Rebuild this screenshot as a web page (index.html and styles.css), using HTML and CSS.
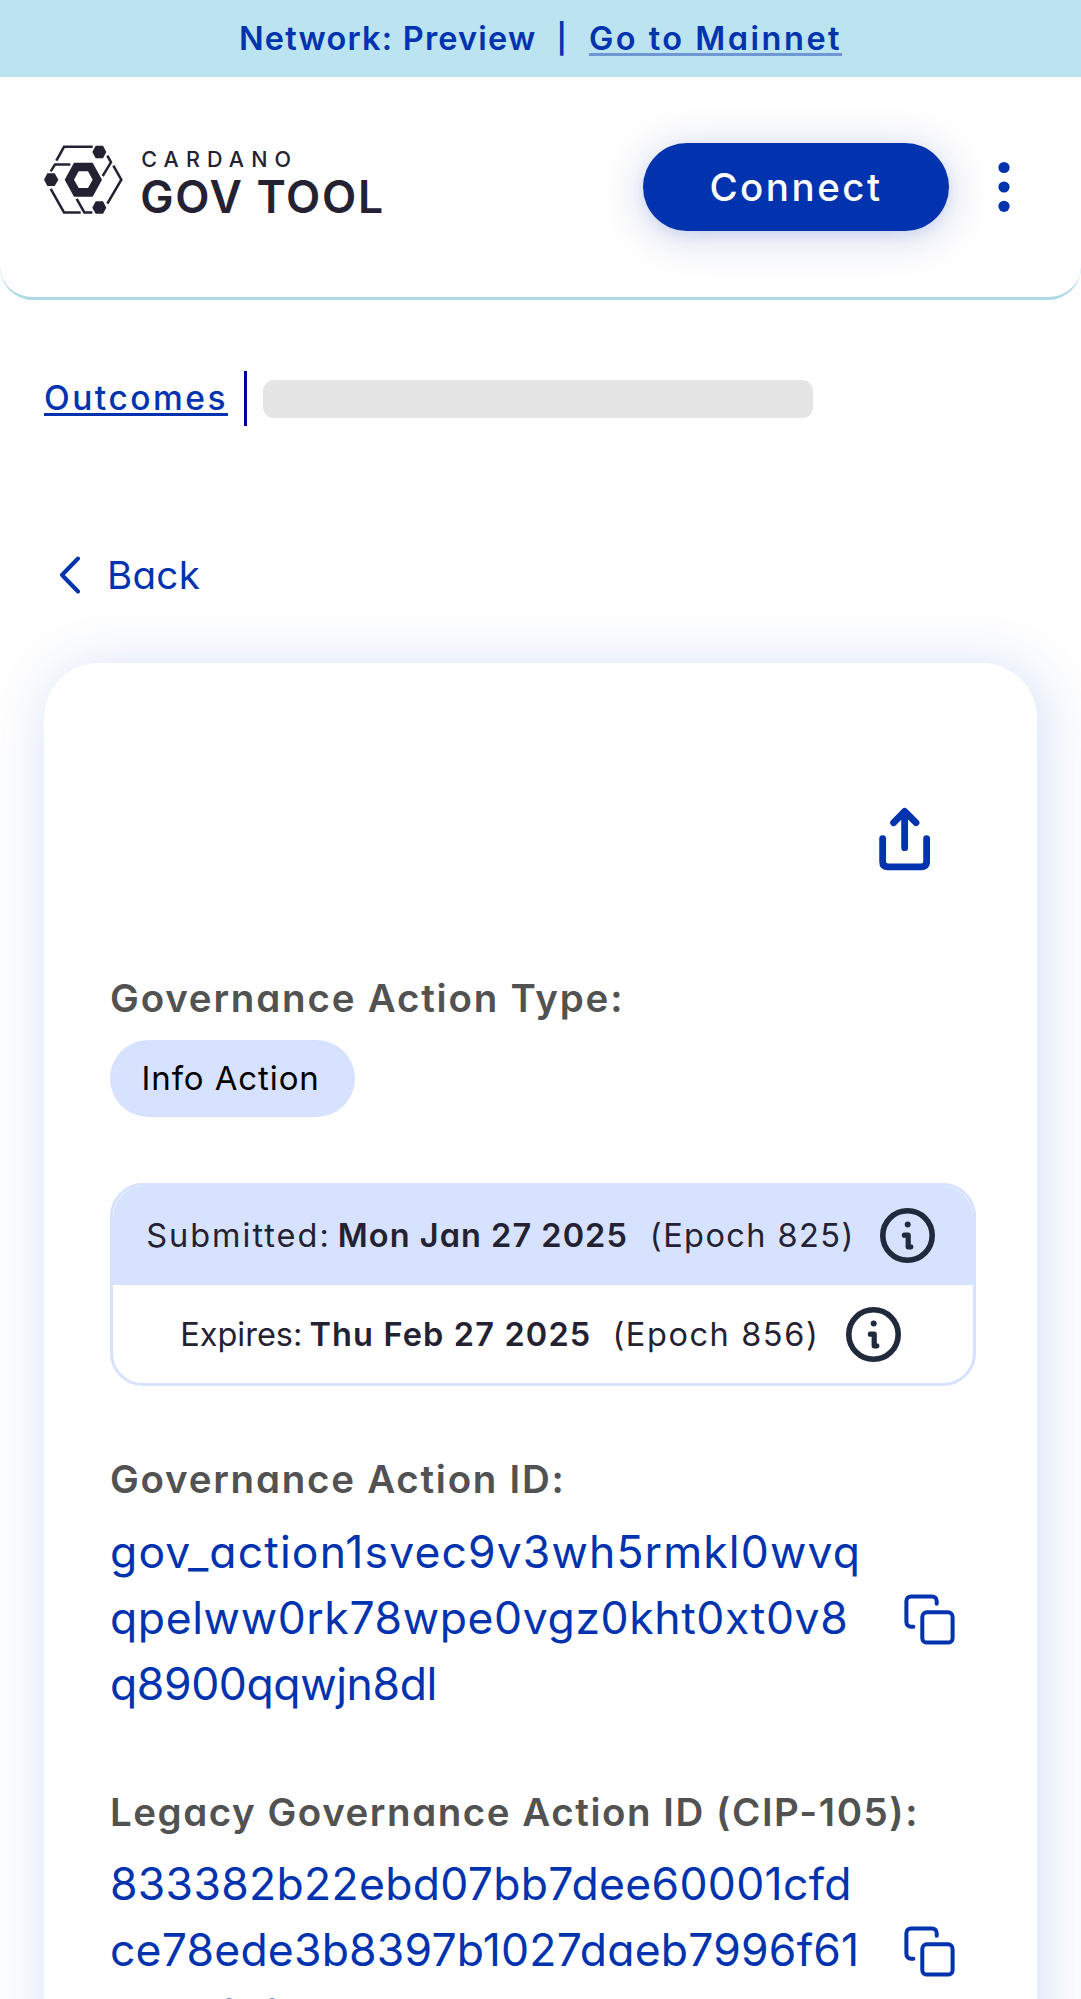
FILE: index.html
```html
<!DOCTYPE html>
<html lang="en">
<head>
<meta charset="utf-8">
<title>Cardano GovTool</title>
<link rel="stylesheet" href="styles.css">
</head>
<body>
<svg class="sprite" width="0" height="0">
  <symbol id="info" viewBox="0 0 55 55">
    <circle cx="27.5" cy="27.5" r="24.7" fill="none" stroke="#212a3d" stroke-width="5.6"/>
    <circle cx="27.7" cy="16.6" r="3" fill="#212a3d"/>
    <path d="M24.4 27.2h3.8V38.8h2.6" fill="none" stroke="#212a3d" stroke-width="5.2" stroke-linecap="round" stroke-linejoin="round"/>
  </symbol>
  <symbol id="copy" viewBox="0 0 51 51">
    <g fill="none" stroke="#0033ad" stroke-width="4" stroke-linecap="round">
      <rect x="18.3" y="18.3" width="30.3" height="30.3" rx="4.6"/>
      <path d="M32.7 9.7V7a4.6 4.6 0 0 0-4.6-4.6H7A4.6 4.6 0 0 0 2.4 7v21A4.6 4.6 0 0 0 7 32.7h2.4"/>
    </g>
  </symbol>
</svg>

<div class="banner">
  <span class="network">Network: Preview</span>
  <span class="pipe">|</span>
  <a class="mainnet">Go to Mainnet</a>
</div>

<header class="header">
  <div class="brand">
    <svg class="mark" viewBox="42 46 236 208">
      <g fill="none" stroke="#242232" stroke-width="7.5">
        <path d="M79 93 102 51.500H188"/>
        <path d="M232 78 243 98 218 139"/>
        <path d="M250 108 274 150 232 222"/>
        <path d="M62 178 102 248.500H152"/>
        <path d="M140 208 163 248.500H187"/>
        <path d="M62 125 75 104.500H121"/>
      </g>
      <g fill="#242232">
        <path d="M187 67 197 48H219L229 67 219 86H197Z"/>
        <path d="M187 234 197 215H219L229 234 219 252H197Z"/>
        <path d="M42 150 52 131H74L85 150 74 169H52Z"/>
        <path fill-rule="evenodd" d="M104 150 132 99H188L216 150 188 201H132ZM132 150 146 175H174L188 150 174 125H146Z"/>
      </g>
    </svg>
    <div class="wordmark">
      <span class="cardano">CARDANO</span>
      <span class="govtool">GOV TOOL</span>
    </div>
  </div>
  <button class="connect">Connect</button>
  <svg class="menu" viewBox="0 0 12 52" fill="#0033ad">
    <circle cx="6" cy="6.500" r="5.600"/><circle cx="6" cy="26" r="5.600"/><circle cx="6" cy="45.300" r="5.600"/>
  </svg>
</header>

<main>
  <nav class="crumbs">
    <a class="outcomes">Outcomes</a>
    <span class="divider"></span>
    <span class="skeleton"></span>
  </nav>

  <a class="back">
    <svg class="chevron" viewBox="0 0 22 38"><path d="M19 2.500 3 19 19 35.500" fill="none" stroke="#0033ad" stroke-width="4" stroke-linecap="round" stroke-linejoin="round"/></svg>
    <span>Back</span>
  </a>

  <section class="card">
    <svg class="share" viewBox="117 500 154 192">
      <g fill="none" stroke="#0033ad" stroke-width="20.500" stroke-linecap="round" stroke-linejoin="round">
        <path d="M128 595V664Q128 679.500 144 679.500H244Q260 679.500 260 664V595"/>
        <path d="M194 622V514M161 547 194 513 228 547"/>
      </g>
    </svg>

    <h2 class="label type">Governance Action Type:</h2>
    <span class="pill">Info Action</span>

    <div class="dates">
      <div class="row submitted">
        <span class="name">Submitted:</span><b>Mon Jan 27 2025</b><span class="epoch">(Epoch 825)</span>
        <svg class="info"><use href="#info"/></svg>
      </div>
      <div class="row expires">
        <span class="name">Expires:</span><b>Thu Feb 27 2025</b><span class="epoch">(Epoch 856)</span>
        <svg class="info"><use href="#info"/></svg>
      </div>
    </div>

    <h2 class="label action">Governance Action ID:</h2>
    <div class="id">
      <div class="value">
        <span class="a1">gov_action1svec9v3wh5rmkl0wvq</span>
        <span class="a2">qpelww0rk78wpe0vgz0kht0xt0v8</span>
        <span class="a3">q8900qqwjn8dl</span>
      </div>
      <svg class="copy"><use href="#copy"/></svg>
    </div>

    <h2 class="label legacy">Legacy Governance Action ID (CIP-105):</h2>
    <div class="id">
      <div class="value">
        <span class="l1">833382b22ebd07bb7dee60001cfd</span>
        <span class="l2">ce78ede3b8397b1027daeb7996f61</span>
        <span class="l3">9e02f8f#0</span>
      </div>
      <svg class="copy"><use href="#copy"/></svg>
    </div>
  </section>
</main>
</body>
</html>
```
FILE: styles.css
```css
* { box-sizing: border-box; }

body {
  margin: 0;
  height: 1999px;
  overflow: hidden;
  background: #fefefe;
  color: #242232;
  font-family: Inter, "Liberation Sans", sans-serif;
  font-feature-settings: "cv11";
  white-space: nowrap;
}

svg { display: block; flex: none; }
.sprite { position: absolute; }

.banner {
  display: flex;
  justify-content: center;
  height: 77px;
  line-height: 77px;
  background: #bbe3f0;
  color: #0033ad;
  font-size: 32.5px;
  font-weight: 600;
}
.network { letter-spacing: 1.2px; }
.pipe { margin: 0 22px 0 20px; font-size: 29px; }
.mainnet {
  letter-spacing: 2.5px;
  text-decoration: underline 2.75px #6f97d3;
  text-decoration-skip-ink: none;
  text-underline-offset: 2.5px;
}

.header {
  display: flex;
  align-items: center;
  height: 222.5px;
  padding: 0 71px 0 44px;
  border-bottom: 3px solid #add8e6;
  border-radius: 0 0 33px 33px;
}
.brand { display: flex; align-items: flex-start; height: 74px; margin: 0 auto 10px 0; }
.mark { width: 78.7px; height: 69.3px; }
.wordmark { display: flex; flex-direction: column; gap: 5px; margin: 3.5px 0 0 17.5px; }
.cardano { font-size: 21.5px; line-height: 22px; font-weight: 500; letter-spacing: 7.1px; padding-left: 1px; }
.govtool { font-size: 44.5px; line-height: 44px; font-weight: 600; letter-spacing: 1.7px; }
.connect {
  width: 306px;
  height: 88px;
  margin-right: 49px;
  padding: 0;
  border: 0;
  border-radius: 44px;
  background: #0033ad;
  box-shadow: 0 5.5px 41px rgba(0, 51, 173, .2), 0 4px 12px rgba(0, 51, 173, .08);
  color: #fff;
  font: 500 38.5px/89px Inter, "Liberation Sans", sans-serif;
  letter-spacing: 2.5px;
}
.menu { width: 12px; height: 52px; }

.crumbs { display: flex; align-items: center; height: 55px; margin: 71.5px 44px 0; }
.outcomes {
  color: #0033ad;
  font-size: 33.5px;
  line-height: 55px;
  font-weight: 500;
  letter-spacing: 2.5px;
  text-decoration: underline 2.75px;
  text-decoration-skip-ink: none;
  text-underline-offset: 2.5px;
}
.divider { width: 2.75px; height: 55px; margin: 0 16px 0 16.5px; background: #00009b; }
.skeleton { width: 550px; height: 38.5px; margin-top: 1px; border-radius: 11px; background: #e5e5e5; }

.back {
  display: flex;
  align-items: center;
  gap: 26px;
  height: 66px;
  margin: 116px 0 0 59px;
  color: #0033ad;
  font-size: 38.5px;
  letter-spacing: .3px;
}
.chevron { width: 22px; height: 38px; }

.card {
  margin: 54.5px 44px 0;
  padding: 144px 66px 66px;
  border-radius: 55px;
  background: #fff;
  box-shadow: 5.5px 5.5px 55px rgba(47, 98, 220, .2);
}
.share { width: 51.3px; height: 64px; margin: 0 41px 0 auto; }

.label {
  margin: 0;
  color: #525252;
  font-size: 38.5px;
  line-height: 58px;
  font-weight: 600;
}
.type { margin-top: 98.5px; letter-spacing: 1.8px; }
.action { margin-top: 64.3px; letter-spacing: 1.75px; }
.legacy { margin-top: 66px; letter-spacing: 1.54px; }

.pill {
  display: block;
  width: 244.5px;
  height: 77px;
  margin-top: 12.5px;
  padding-left: 31.5px;
  border-radius: 38.5px;
  background: #d6e2ff;
  color: #000;
  font-size: 33px;
  line-height: 76px;
  letter-spacing: .9px;
}

.dates {
  width: 866px;
  height: 203.5px;
  margin-top: 66px;
  border: 3px solid #d6e2ff;
  border-radius: 33px;
  font-size: 32.5px;
}
.row {
  display: flex;
  align-items: center;
  justify-content: center;
  height: 99px;
  padding-right: 4.5px;
}
.row b { font-weight: 600; }
.submitted { border-radius: 31px 31px 0 0; background: #d6e2ff; }
.submitted .name { margin-right: 7px; letter-spacing: 2px; }
.submitted b { margin-right: 22px; letter-spacing: 1.03px; }
.submitted .epoch { margin-right: 25.5px; letter-spacing: 1.43px; }
.expires .name { margin-right: 7px; letter-spacing: 0; }
.expires b { margin-right: 21px; letter-spacing: 1.15px; }
.expires .epoch { margin-right: 27px; letter-spacing: 1.58px; }
.info { width: 55px; height: 55px; }

.id {
  display: flex;
  align-items: center;
  justify-content: space-between;
  margin: 10.3px 16px 0 0;
  color: #0033ad;
}
.value { display: flex; flex-direction: column; font-size: 44.5px; line-height: 66px; }
.a1 { letter-spacing: 1.12px; }
.a2 { letter-spacing: .6px; }
.a3 { letter-spacing: -.4px; }
.l1 { letter-spacing: .3px; }
.l2 { letter-spacing: .2px; }
.l3 { letter-spacing: -.5px; }
.copy { width: 51px; height: 51px; margin-top: 3px; }
```
